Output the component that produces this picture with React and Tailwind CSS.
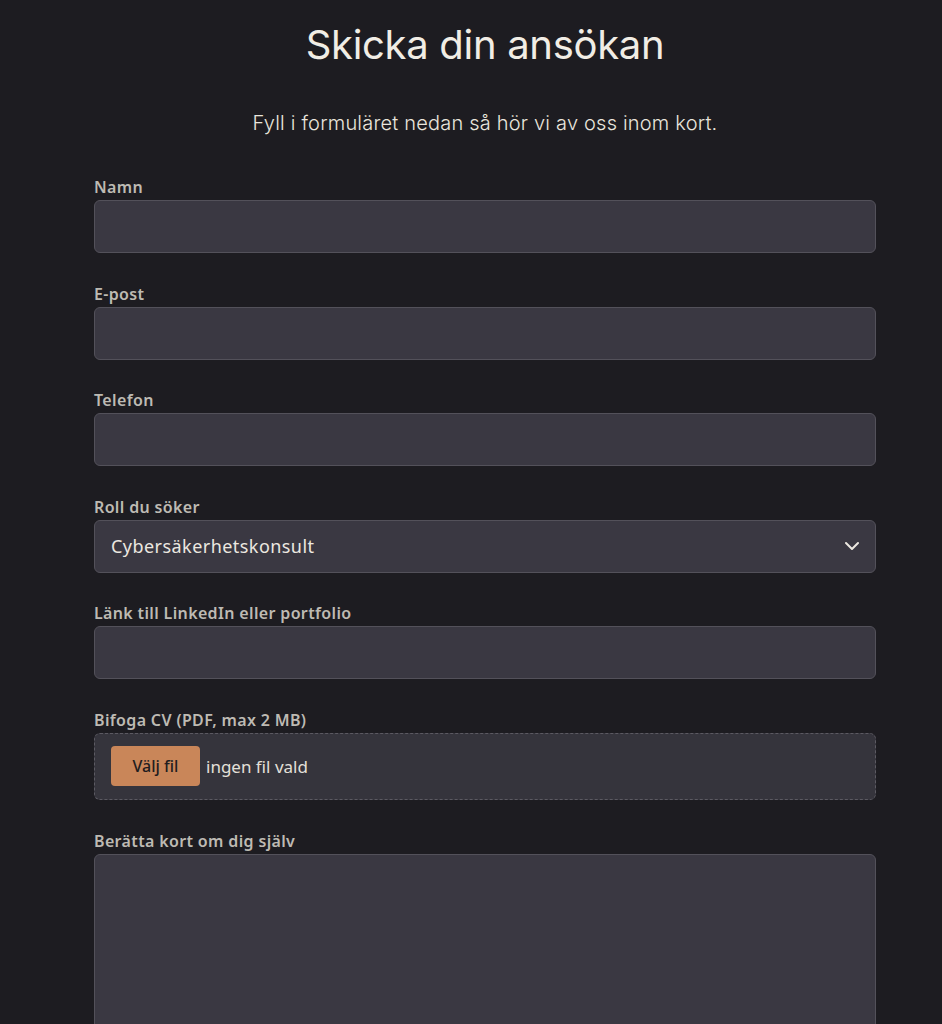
import React from "react";

const fields = [
  { label: "Namn", type: "text" },
  { label: "E-post", type: "email" },
  { label: "Telefon", type: "tel" },
];

const Label = ({ children }) => (
  <label className="block text-[16px] leading-5 font-semibold tracking-[0.35px] text-[#bdbab3] mb-[3px]">
    {children}
  </label>
);

const inputClass =
  "block w-full h-[53px] rounded-[6px] bg-[#3a3842] border border-[#53515a] px-4 text-[18px] text-[#ece8e0] outline-none";

export default function App() {
  return (
    <div className="min-h-screen bg-[#1d1c21] font-['Noto_Sans',sans-serif]">
      <div className="pl-[94px] pt-[21px] w-[876px]">
        {/* Header */}
        <h1 className="text-center font-['Inter',sans-serif] text-[40px] leading-[48px] font-normal text-[#f1ede5] tracking-[-0.3px]">
          Skicka din ansökan
        </h1>
        <p className="mt-10 text-center font-['Inter',sans-serif] text-[20px] leading-7 font-light text-[#e9e5dd] tracking-[0.2px]">
          Fyll i formuläret nedan så hör vi av oss inom kort.
        </p>

        {/* Form */}
        <form className="mt-10 flex flex-col gap-[30.6px]">
          {fields.map((f) => (
            <div key={f.label}>
              <Label>{f.label}</Label>
              <input type={f.type} className={inputClass} />
            </div>
          ))}

          <div>
            <Label>Roll du söker</Label>
            <div className="relative">
              <div className={`${inputClass} flex items-center`}>
                <span className="text-[18px] tracking-[0.45px] text-[#ece8e0]">Cybersäkerhetskonsult</span>
              </div>
              <svg
                className="absolute right-[17px] top-1/2 -translate-y-1/2"
                width="14"
                height="9"
                viewBox="0 0 14 9"
                fill="none"
                stroke="#ece8e0"
                strokeWidth="2"
                strokeLinecap="round"
                strokeLinejoin="round"
              >
                <polyline points="1,1.5 7,7.5 13,1.5" />
              </svg>
            </div>
          </div>

          <div>
            <Label>Länk till LinkedIn eller portfolio</Label>
            <input type="url" className={inputClass} />
          </div>

          <div>
            <Label>Bifoga CV (PDF, max 2 MB)</Label>
            <div className="h-[67px] rounded-[6px] bg-[#35343c] border border-dashed border-[#5c5a62] pl-4 flex items-center gap-[6px]">
              <span className="h-10 w-[89px] rounded-[4px] bg-[#c98659] text-[#1f1d20] text-[16px] font-medium flex items-center justify-center">
                Välj fil
              </span>
              <span className="text-[17px] text-[#e4e0d9]">ingen fil vald</span>
            </div>
          </div>

          <div>
            <Label>Berätta kort om dig själv</Label>
            <textarea className="block w-full h-[220px] rounded-[6px] bg-[#3a3842] border border-[#53515a] resize-none outline-none" />
          </div>
        </form>
      </div>
    </div>
  );
}
